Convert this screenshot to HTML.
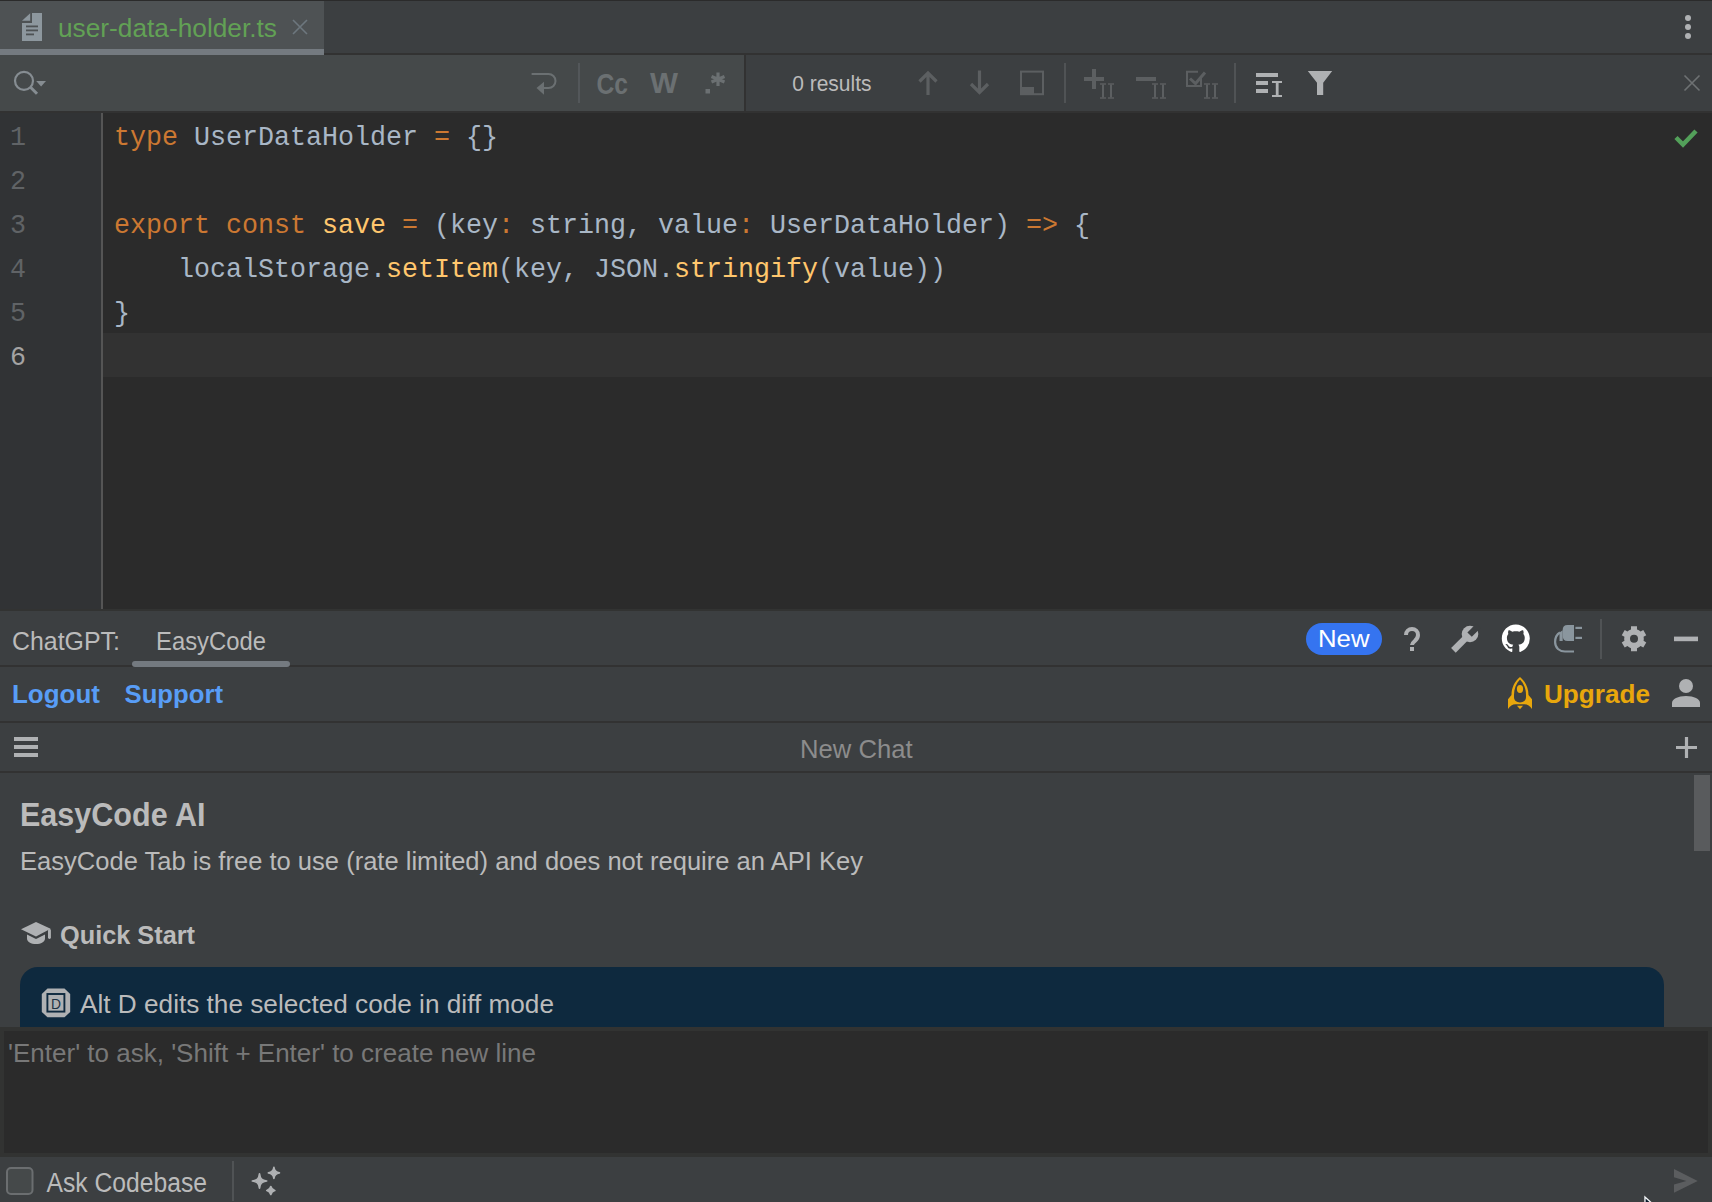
<!DOCTYPE html>
<html><head><meta charset="utf-8"><title>user-data-holder.ts</title>
<style>*{margin:0;padding:0}html,body{width:1712px;height:1202px;overflow:hidden;background:#3c3f41;font-family:"Liberation Sans",sans-serif}</style>
</head><body><svg width="1712" height="1202" viewBox="0 0 1712 1202" style="position:absolute;left:0;top:0;display:block"><rect x="0" y="0" width="1712" height="1202" fill="#3c3f41"/><rect x="0" y="0" width="1712" height="1" fill="#2b2b2b"/><rect x="0" y="1" width="324" height="54" fill="#4e5254"/><rect x="0" y="49" width="324" height="6" fill="#747a80"/><rect x="324" y="53" width="1388" height="2" fill="#323232"/><rect x="0" y="55" width="744" height="56" fill="#45494a"/><rect x="744" y="55" width="2" height="56" fill="#323232"/><rect x="0" y="111" width="1712" height="2" fill="#323232"/><rect x="0" y="113" width="1712" height="496" fill="#2b2b2b"/><rect x="0" y="113" width="101" height="496" fill="#313335"/><rect x="101" y="113" width="2" height="496" fill="#555555"/><rect x="103" y="333" width="1609" height="44" fill="#323232"/><rect x="0" y="609" width="1712" height="2" fill="#323332"/><rect x="0" y="665" width="1712" height="2" fill="#323232"/><rect x="132" y="661" width="158" height="6" fill="#747a80" rx="3"/><rect x="0" y="721" width="1712" height="2" fill="#323232"/><rect x="0" y="771" width="1712" height="2" fill="#323232"/><path d="M20,1027 V985 A18,18 0 0 1 38,967 H1646 A18,18 0 0 1 1664,985 V1027 Z" fill="#0e293e"/><rect x="1694" y="775" width="16" height="76" fill="#595b5d"/><rect x="0" y="1027" width="1712" height="130" fill="#323332"/><rect x="4" y="1031" width="1704" height="122" fill="#2b2b2b"/><path d="M22,20.8 L30.2,13.2 V20.8 Z" fill="#8d979e"/><path d="M32,13 H42 V41 H22 V23 H32 Z" fill="#8d979e"/><rect x="26" y="25.5" width="12" height="1.8" fill="#4e5254"/><rect x="26" y="29.5" width="12" height="1.8" fill="#4e5254"/><rect x="26" y="33.5" width="8" height="1.8" fill="#4e5254"/><text x="58" y="37" font-size="26" fill="#62a155" font-family="Liberation Sans" textLength="219" lengthAdjust="spacingAndGlyphs">user-data-holder.ts</text><path d="M293,20 L307,34 M307,20 L293,34" stroke="#6d777e" stroke-width="1.6"/><circle cx="1688" cy="18" r="3" fill="#afb1b3"/><circle cx="1688" cy="27" r="3" fill="#afb1b3"/><circle cx="1688" cy="36" r="3" fill="#afb1b3"/><circle cx="24" cy="80.8" r="9" fill="none" stroke="#868d92" stroke-width="2.2"/><path d="M30.5,87.3 L37,93.8" stroke="#868d92" stroke-width="3"/><path d="M36.2,81 H46 L41.1,86.6 Z" fill="#868d92"/><path d="M531.6,74 H548.5 A7,7 0 0 1 548.5,88 H542" fill="none" stroke="#6b7072" stroke-width="2"/><path d="M536.5,88 L544,81.8 V94.7 Z" fill="#6b7072"/><rect x="578" y="63" width="2" height="40" fill="#53575a"/><text x="596.5" y="93.6" font-size="30" fill="#6b7072" font-family="Liberation Sans" font-weight="bold" textLength="31.5" lengthAdjust="spacingAndGlyphs">Cc</text><text x="650" y="93.4" font-size="29" fill="#6b7072" font-family="Liberation Sans" font-weight="bold" textLength="28" lengthAdjust="spacingAndGlyphs">W</text><rect x="705.5" y="89" width="4.5" height="4.5" fill="#6b7072"/><path d="M718,72.5 V86 M711.5,76.5 L724.5,82 M724.5,76.5 L711.5,82" stroke="#6b7072" stroke-width="3.2"/><text x="792.2" y="91" font-size="22" fill="#bbbbbb" font-family="Liberation Sans" textLength="79.3" lengthAdjust="spacingAndGlyphs">0 results</text><path d="M928,95 V73 M919.5,81.5 L928,73 L936.5,81.5" fill="none" stroke="#5c5f61" stroke-width="3.2"/><path d="M979.5,70.5 V92.5 M971,84 L979.5,92.5 L988,84" fill="none" stroke="#5c5f61" stroke-width="3.2"/><rect x="1021" y="71.6" width="22" height="22.6" fill="none" stroke="#5c5f61" stroke-width="2"/><rect x="1020" y="87" width="14" height="8" fill="#5c5f61"/><rect x="1064" y="63" width="2" height="40" fill="#505355"/><path d="M1084,79 H1104 M1094,69 V89" stroke="#5c5f61" stroke-width="4"/><rect x="1102" y="84.5" width="2" height="13" fill="#5c5f61"/><rect x="1100" y="83" width="6" height="2" fill="#5c5f61" opacity="0.7"/><rect x="1100" y="97" width="6" height="2" fill="#5c5f61" opacity="0.7"/><rect x="1110" y="84.5" width="2" height="13" fill="#5c5f61"/><rect x="1108" y="83" width="6" height="2" fill="#5c5f61" opacity="0.7"/><rect x="1108" y="97" width="6" height="2" fill="#5c5f61" opacity="0.7"/><path d="M1136,79 H1156" stroke="#5c5f61" stroke-width="4"/><rect x="1154" y="84.5" width="2" height="13" fill="#5c5f61"/><rect x="1152" y="83" width="6" height="2" fill="#5c5f61" opacity="0.7"/><rect x="1152" y="97" width="6" height="2" fill="#5c5f61" opacity="0.7"/><rect x="1162" y="84.5" width="2" height="13" fill="#5c5f61"/><rect x="1160" y="83" width="6" height="2" fill="#5c5f61" opacity="0.7"/><rect x="1160" y="97" width="6" height="2" fill="#5c5f61" opacity="0.7"/><path d="M1201,77 V86 H1187 V71.8 H1198" fill="none" stroke="#5c5f61" stroke-width="2"/><path d="M1190,78.5 L1195.5,83.5 L1205,72.5" fill="none" stroke="#5c5f61" stroke-width="3"/><rect x="1206" y="84.5" width="2" height="13" fill="#5c5f61"/><rect x="1204" y="83" width="6" height="2" fill="#5c5f61" opacity="0.7"/><rect x="1204" y="97" width="6" height="2" fill="#5c5f61" opacity="0.7"/><rect x="1214" y="84.5" width="2" height="13" fill="#5c5f61"/><rect x="1212" y="83" width="6" height="2" fill="#5c5f61" opacity="0.7"/><rect x="1212" y="97" width="6" height="2" fill="#5c5f61" opacity="0.7"/><rect x="1234" y="63" width="2" height="40" fill="#505355"/><rect x="1256" y="73" width="22" height="4" fill="#afb1b3"/><rect x="1256" y="81" width="12" height="4" fill="#afb1b3"/><rect x="1256" y="89" width="12" height="4" fill="#afb1b3"/><rect x="1272" y="81" width="10" height="2" fill="#afb1b3"/><rect x="1275.8" y="83" width="2.8" height="12" fill="#afb1b3"/><rect x="1272" y="95" width="10" height="2" fill="#afb1b3"/><path d="M1307.8,71 H1332.2 L1323.2,82.8 V95 H1317 V82.8 Z" fill="#afb1b3"/><path d="M1684.5,75.5 L1699.5,90.5 M1699.5,75.5 L1684.5,90.5" stroke="#6e7173" stroke-width="1.6"/><g transform="translate(0,145) scale(1,1.05) translate(0,-145)"><text x="114" y="145" font-family="Liberation Mono" font-size="26.67" fill="#cc7832" xml:space="preserve">type</text><text x="178" y="145" font-family="Liberation Mono" font-size="26.67" fill="#a9b7c6" xml:space="preserve"> UserDataHolder </text><text x="434" y="145" font-family="Liberation Mono" font-size="26.67" fill="#cc7832" xml:space="preserve">=</text><text x="450" y="145" font-family="Liberation Mono" font-size="26.67" fill="#a9b7c6" xml:space="preserve"> {}</text></g><g transform="translate(0,233) scale(1,1.05) translate(0,-233)"><text x="114" y="233" font-family="Liberation Mono" font-size="26.67" fill="#cc7832" xml:space="preserve">export const</text><text x="322" y="233" font-family="Liberation Mono" font-size="26.67" fill="#ffc66d" xml:space="preserve">save</text><text x="402" y="233" font-family="Liberation Mono" font-size="26.67" fill="#cc7832" xml:space="preserve">=</text><text x="418" y="233" font-family="Liberation Mono" font-size="26.67" fill="#a9b7c6" xml:space="preserve"> (key</text><text x="498" y="233" font-family="Liberation Mono" font-size="26.67" fill="#cc7832" xml:space="preserve">:</text><text x="514" y="233" font-family="Liberation Mono" font-size="26.67" fill="#a9b7c6" xml:space="preserve"> string, value</text><text x="738" y="233" font-family="Liberation Mono" font-size="26.67" fill="#cc7832" xml:space="preserve">:</text><text x="754" y="233" font-family="Liberation Mono" font-size="26.67" fill="#a9b7c6" xml:space="preserve"> UserDataHolder) </text><text x="1026" y="233" font-family="Liberation Mono" font-size="26.67" fill="#cc7832" xml:space="preserve">=&gt;</text><text x="1058" y="233" font-family="Liberation Mono" font-size="26.67" fill="#a9b7c6" xml:space="preserve"> {</text></g><g transform="translate(0,277) scale(1,1.05) translate(0,-277)"><text x="114" y="277" font-family="Liberation Mono" font-size="26.67" fill="#a9b7c6" xml:space="preserve">    localStorage.</text><text x="386" y="277" font-family="Liberation Mono" font-size="26.67" fill="#ffc66d" xml:space="preserve">setItem</text><text x="498" y="277" font-family="Liberation Mono" font-size="26.67" fill="#a9b7c6" xml:space="preserve">(key, JSON.</text><text x="674" y="277" font-family="Liberation Mono" font-size="26.67" fill="#ffc66d" xml:space="preserve">stringify</text><text x="818" y="277" font-family="Liberation Mono" font-size="26.67" fill="#a9b7c6" xml:space="preserve">(value))</text></g><g transform="translate(0,321) scale(1,1.05) translate(0,-321)"><text x="114" y="321" font-family="Liberation Mono" font-size="26.67" fill="#a9b7c6" xml:space="preserve">}</text></g><g transform="translate(0,145) scale(1,1.05) translate(0,-145)"><text x="10" y="145" font-family="Liberation Mono" font-size="26.67" fill="#606366">1</text></g><g transform="translate(0,189) scale(1,1.05) translate(0,-189)"><text x="10" y="189" font-family="Liberation Mono" font-size="26.67" fill="#606366">2</text></g><g transform="translate(0,233) scale(1,1.05) translate(0,-233)"><text x="10" y="233" font-family="Liberation Mono" font-size="26.67" fill="#606366">3</text></g><g transform="translate(0,277) scale(1,1.05) translate(0,-277)"><text x="10" y="277" font-family="Liberation Mono" font-size="26.67" fill="#606366">4</text></g><g transform="translate(0,321) scale(1,1.05) translate(0,-321)"><text x="10" y="321" font-family="Liberation Mono" font-size="26.67" fill="#606366">5</text></g><g transform="translate(0,365) scale(1,1.05) translate(0,-365)"><text x="10" y="365" font-family="Liberation Mono" font-size="26.67" fill="#a4a3a3">6</text></g><path d="M1676,137.5 L1683,144.5 L1696,131" fill="none" stroke="#53a05a" stroke-width="4.5"/><text x="12" y="650" font-size="26" fill="#bbbbbb" font-family="Liberation Sans" textLength="108" lengthAdjust="spacingAndGlyphs">ChatGPT:</text><text x="156" y="650" font-size="26" fill="#bbbbbb" font-family="Liberation Sans" textLength="110" lengthAdjust="spacingAndGlyphs">EasyCode</text><rect x="1306" y="623" width="76" height="32" fill="#3574f0" rx="16"/><text x="1318" y="647" font-size="24" fill="#ffffff" font-family="Liberation Sans" textLength="51.5" lengthAdjust="spacingAndGlyphs">New</text><path d="M1406,635 A6,6 0 0 1 1418,635 C1418,638 1416.5,639.5 1414.8,641 C1413,642.5 1412,643.5 1412,645" fill="none" stroke="#afb1b3" stroke-width="4"/><rect x="1410" y="647" width="4" height="4" fill="#afb1b3"/><path d="M1453.4,650.4 L1466,637.8" stroke="#afb1b3" stroke-width="6.5"/><circle cx="1470" cy="634" r="8.3" fill="#afb1b3"/><path d="M1471.8,636.8 L1467.4,632.4 L1476.3,623.5 L1480.7,627.9 Z" fill="#3c3f41"/><g transform="translate(1501.8,624.6) scale(1.75)"><path fill="#ffffff" d="M8 0C3.58 0 0 3.58 0 8c0 3.54 2.29 6.53 5.47 7.59.4.07.55-.17.55-.38 0-.19-.01-.82-.01-1.49-2.01.37-2.53-.49-2.69-.94-.09-.23-.48-.94-.82-1.13-.28-.15-.68-.52-.01-.53.63-.01 1.08.58 1.23.82.72 1.21 1.87.87 2.33.66.07-.52.28-.87.51-1.07-1.78-.2-3.64-.89-3.64-3.95 0-.87.31-1.59.82-2.15-.08-.2-.36-1.02.08-2.12 0 0 .67-.21 2.2.82.64-.18 1.32-.27 2-.27.68 0 1.36.09 2 .27 1.53-1.04 2.2-.82 2.2-.82.44 1.1.16 1.92.08 2.12.51.56.82 1.27.82 2.15 0 3.07-1.87 3.75-3.65 3.95.29.25.54.73.54 1.48 0 1.07-.01 1.93-.01 2.2 0 .21.15.46.55.38A8.013 8.013 0 0016 8c0-4.42-3.58-8-8-8z"/></g><path d="M1574,625 H1567.5 Q1562.7,625 1562.7,630 V636 Q1562.7,641 1567.5,641 H1574 Z" fill="#8a969e"/><rect x="1575.4" y="626.8" width="6.6" height="2.2" fill="#8a969e"/><rect x="1575.4" y="636.8" width="6.6" height="2.2" fill="#8a969e"/><path d="M1562.7,630.3 L1559.5,632.5 V641 H1562.7 Z" fill="#8a969e"/><path d="M1560,632.5 C1556.5,634.5 1555.1,638 1555.1,642 C1555.1,648 1559.5,651.5 1565,651.5 H1574" fill="none" stroke="#8a969e" stroke-width="2.2"/><rect x="1600" y="619" width="2" height="40" fill="#505355"/><path d="M1631.00,629.47 L1631.01,626.35 L1636.99,626.35 L1637.00,629.47 A9.8,9.8 0 0 1 1640.58,631.54 L1640.58,631.54 L1643.28,629.99 L1646.27,635.16 L1643.58,636.73 A9.8,9.8 0 0 1 1643.58,640.87 L1643.58,640.87 L1646.27,642.44 L1643.28,647.61 L1640.58,646.06 A9.8,9.8 0 0 1 1637.00,648.13 L1637.00,648.13 L1636.99,651.25 L1631.01,651.25 L1631.00,648.13 A9.8,9.8 0 0 1 1627.42,646.06 L1627.42,646.06 L1624.72,647.61 L1621.73,642.44 L1624.42,640.87 A9.8,9.8 0 0 1 1624.42,636.73 L1624.42,636.73 L1621.73,635.16 L1624.72,629.99 L1627.42,631.54 A9.8,9.8 0 0 1 1631.00,629.47 Z M1638,638.8 A4,4 0 1 0 1630,638.8 A4,4 0 1 0 1638,638.8 Z" fill="#afb1b3" fill-rule="evenodd"/><rect x="1674" y="636.6" width="24" height="4.6" fill="#afb1b3"/><text x="12" y="703" font-size="26" fill="#589df6" font-family="Liberation Sans" font-weight="bold" textLength="88" lengthAdjust="spacingAndGlyphs">Logout</text><text x="124.5" y="703" font-size="26" fill="#589df6" font-family="Liberation Sans" font-weight="bold" textLength="98.5" lengthAdjust="spacingAndGlyphs">Support</text><path fill-rule="evenodd" fill="#e8a70c" d="M1520,677 C1514.5,681.5 1511.5,688 1511.5,695 L1508,699.3 V709 C1510,706 1512.5,704.2 1515.5,704.2 H1524.5 C1527.5,704.2 1530,706 1532,709 V699.3 L1528.5,695 C1528.5,688 1525.5,681.5 1520,677 Z M1520,679.6 C1516,683.5 1514,689 1514,695 V697 C1514,700.5 1516.5,702.4 1520,702.4 C1523.5,702.4 1526,700.5 1526,697 V695 C1526,689 1524,683.5 1520,679.6 Z"/><ellipse cx="1520" cy="689" rx="3.1" ry="4" fill="#e8a70c"/><path d="M1517,705.7 H1523 L1520,709.2 Z" fill="#e8a70c"/><text x="1544" y="703.3" font-size="26" fill="#e8a70c" font-family="Liberation Sans" font-weight="bold" textLength="106" lengthAdjust="spacingAndGlyphs">Upgrade</text><circle cx="1686" cy="686" r="7" fill="#afb1b3"/><path d="M1672,707 V703 C1672,699 1678,696 1686,696 C1694,696 1700,699 1700,703 V707 Z" fill="#afb1b3"/><rect x="14" y="737" width="24" height="4" fill="#afb1b3"/><rect x="14" y="745" width="24" height="4" fill="#afb1b3"/><rect x="14" y="753" width="24" height="4" fill="#afb1b3"/><text x="800" y="757.5" font-size="26" fill="#8c8c8c" font-family="Liberation Sans" textLength="112.5" lengthAdjust="spacingAndGlyphs">New Chat</text><path d="M1676,747.5 H1697 M1686.5,737 V758" stroke="#afb1b3" stroke-width="3.2"/><text x="20" y="825.7" font-size="33" fill="#bbbbbb" font-family="Liberation Sans" font-weight="bold" textLength="185.5" lengthAdjust="spacingAndGlyphs">EasyCode AI</text><text x="20" y="869.5" font-size="26" fill="#bbbbbb" font-family="Liberation Sans" textLength="843" lengthAdjust="spacingAndGlyphs">EasyCode Tab is free to use (rate limited) and does not require an API Key</text><path d="M21,929.3 L36,922 L50.6,928.7 L36,936.6 Z" fill="#afb1b3"/><path d="M27,934.6 L36,939 L45,934.6 V938.5 C45,942 41,944 36,944 C31,944 27,942 27,938.5 Z" fill="#afb1b3"/><rect x="48" y="929" width="2.9" height="10" rx="1.4" fill="#afb1b3"/><text x="60" y="943.8" font-size="26" fill="#bbbbbb" font-family="Liberation Sans" font-weight="bold" textLength="135" lengthAdjust="spacingAndGlyphs">Quick Start</text><path d="M47.5,988.5 H64.5 L70.2,994 V1012 L64.5,1017.3 H47.5 L41.8,1012 V994 Z" fill="#afb1b3"/><rect x="47.4" y="994" width="17" height="17.6" fill="none" stroke="#0e293e" stroke-width="1.9"/><text x="51" y="1009" font-size="15" font-family="Liberation Sans" fill="#1d3245" textLength="10" lengthAdjust="spacingAndGlyphs">D</text><text x="80" y="1012.9" font-size="26.5" fill="#bbbbbb" font-family="Liberation Sans" textLength="474" lengthAdjust="spacingAndGlyphs">Alt D edits the selected code in diff mode</text><text x="8" y="1062" font-size="26" fill="#787878" font-family="Liberation Sans" textLength="528" lengthAdjust="spacingAndGlyphs">'Enter' to ask, 'Shift + Enter' to create new line</text><rect x="7" y="1168" width="25.5" height="26" rx="4" fill="#45494a" stroke="#6b6e70" stroke-width="2"/><text x="46.5" y="1192" font-size="27" fill="#bbbbbb" font-family="Liberation Sans" textLength="160.5" lengthAdjust="spacingAndGlyphs">Ask Codebase</text><rect x="232" y="1161" width="2" height="40" fill="#505355"/><path d="M259.5,1173.8 C260.076,1178.624 261.876,1180.424 266.7,1181 C261.876,1181.576 260.076,1183.376 259.5,1188.2 C258.924,1183.376 257.124,1181.576 252.3,1181 C257.124,1180.424 258.924,1178.624 259.5,1173.8 Z M273.9,1167.4 C274.34,1171.085 275.715,1172.46 279.4,1172.9 C275.715,1173.3400000000001 274.34,1174.7150000000001 273.9,1178.4 C273.46,1174.7150000000001 272.085,1173.3400000000001 268.4,1172.9 C272.085,1172.46 273.46,1171.085 273.9,1167.4 Z M270.8,1186.5 C271.36,1188.82 272.48,1189.94 274.8,1190.5 C272.48,1191.06 271.36,1192.18 270.8,1194.5 C270.24,1192.18 269.12,1191.06 266.8,1190.5 C269.12,1189.94 270.24,1188.82 270.8,1186.5 Z" fill="#afb1b3" stroke="#afb1b3" stroke-width="1.7" stroke-linejoin="round"/><path d="M1674,1169 L1697.7,1181 L1674,1192.7 V1184.4 L1686.4,1181 L1674,1177.3 Z" fill="#5b5d5f"/><path d="M1644.3,1195.5 L1651.5,1202 H1644.3 Z" fill="#f4f6f8"/><path d="M1645.6,1198.4 L1649.5,1202 H1645.6 Z" fill="#0a1a2a"/></svg></body></html>
